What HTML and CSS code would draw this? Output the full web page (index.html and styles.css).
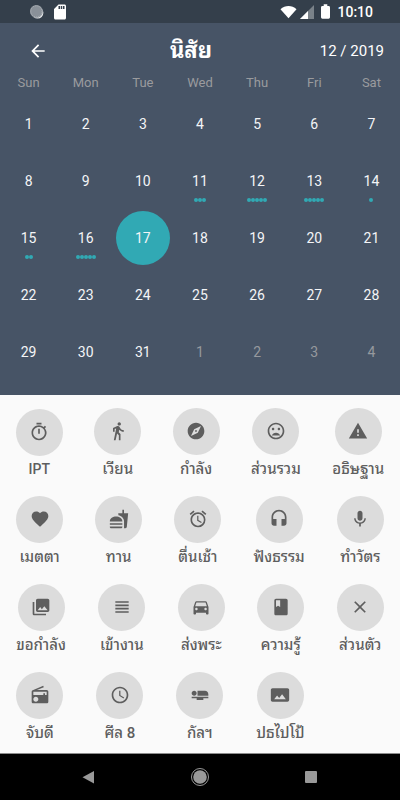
FILE: index.html
```html
<!DOCTYPE html>
<html lang="th">
<head>
<meta charset="utf-8">
<meta name="viewport" content="width=device-width, initial-scale=1">
<title>นิสัย</title>
<link rel="stylesheet" href="styles.css">
</head>
<body>
<div class="status">
  <div class="status-group status-left">
    <svg class="sync" viewBox="0 0 16 16" aria-hidden="true"><circle cx="8.6" cy="8.8" r="5.800" fill="#e8eaec"/><circle cx="7.4" cy="7.4" r="6.4" fill="#8a9199"/><circle cx="7.4" cy="7.4" r="5.6" fill="none" stroke="#b4b9be" stroke-dasharray="1 1"/></svg>
    <svg class="sd" viewBox="0 0 24 24" aria-hidden="true"><path d="M18 2h-8L4.020 8 4 20c0 1.100.9 2 2 2h12c1.100 0 2-.9 2-2V4c0-1.100-.9-2-2-2zm-6 6h-2V4h2v4zm3 0h-2V4h2v4zm3 0h-2V4h2v4z"/></svg>
  </div>
  <div class="status-group status-right">
    <svg class="wifi" viewBox="0 0 18 14" aria-hidden="true"><path d="M.5 4C5.500-.3 12.500-.3 17.500 4L9 13.600z"/></svg>
    <svg class="signal" viewBox="0 0 14 14" aria-hidden="true"><path d="M14 0v14H0z" opacity=".35"/><path d="M8 6v8H0z"/></svg>
    <svg class="battery" viewBox="0 0 10 16" aria-hidden="true"><path d="M3 0h4v2h1.500Q10 2 10 3.500v11Q10 16 8.500 16h-7Q0 16 0 14.500v-11Q0 2 1.500 2H3z"/></svg>
    <span class="clock">10:10</span>
  </div>
</div>
<main>
  <section class="calendar">
    <header class="bar">
      <button class="back" type="button" aria-label="Back"><svg class="icon" viewBox="0 0 24 24"><path d="M20 11H7.830l5.590-5.590L12 4l-8 8 8 8 1.410-1.410L7.830 13H20v-2z"/></svg></button>
      <h1>นิสัย</h1>
      <span class="month">12 / 2019</span>
    </header>
    <table>
      <thead>
        <tr><th>Sun</th><th>Mon</th><th>Tue</th><th>Wed</th><th>Thu</th><th>Fri</th><th>Sat</th></tr>
      </thead>
      <tbody>
        <tr><td><button class="day">1</button></td><td><button class="day">2</button></td><td><button class="day">3</button></td><td><button class="day">4</button></td><td><button class="day">5</button></td><td><button class="day">6</button></td><td><button class="day">7</button></td></tr>
        <tr><td><button class="day">8</button></td><td><button class="day">9</button></td><td><button class="day">10</button></td><td><button class="day">11<span class="dots"><i></i><i></i><i></i></span></button></td><td><button class="day">12<span class="dots"><i></i><i></i><i></i><i></i><i></i></span></button></td><td><button class="day">13<span class="dots"><i></i><i></i><i></i><i></i><i></i></span></button></td><td><button class="day">14<span class="dots"><i></i></span></button></td></tr>
        <tr><td><button class="day">15<span class="dots"><i></i><i></i></span></button></td><td><button class="day">16<span class="dots"><i></i><i></i><i></i><i></i><i></i></span></button></td><td><button class="day selected">17</button></td><td><button class="day">18</button></td><td><button class="day">19</button></td><td><button class="day">20</button></td><td><button class="day">21</button></td></tr>
        <tr><td><button class="day">22</button></td><td><button class="day">23</button></td><td><button class="day">24</button></td><td><button class="day">25</button></td><td><button class="day">26</button></td><td><button class="day">27</button></td><td><button class="day">28</button></td></tr>
        <tr><td><button class="day">29</button></td><td><button class="day">30</button></td><td><button class="day">31</button></td><td><button class="day outside">1</button></td><td><button class="day outside">2</button></td><td><button class="day outside">3</button></td><td><button class="day outside">4</button></td></tr>
      </tbody>
    </table>
  </section>
  <section class="habits">
    <div class="row">
      <button class="habit"><span class="disc"><svg class="icon" viewBox="0 0 24 24"><path d="M15 1H9v2h6V1zm-4 13h2V8h-2v6zm8.030-6.610l1.420-1.420c-.43-.51-.9-.99-1.410-1.410l-1.420 1.420A8.962 8.962 0 0 0 12 4c-4.970 0-9 4.030-9 9s4.020 9 9 9a8.994 8.994 0 0 0 7.030-14.610zM12 20c-3.870 0-7-3.130-7-7s3.130-7 7-7 7 3.130 7 7-3.130 7-7 7z"/></svg></span><span class="label latin">IPT</span></button>
      <button class="habit"><span class="disc"><svg class="icon" viewBox="0 0 24 24"><path d="M13.500 5.500c1.100 0 2-.9 2-2s-.9-2-2-2-2 .9-2 2 .9 2 2 2zM9.800 8.900L7 23h2.100l1.800-8 2.100 2v6h2v-7.500l-2.100-2 .6-3C14.800 12 16.800 13 19 13v-2c-1.900 0-3.500-1-4.300-2.400l-1-1.600c-.4-.6-1-1-1.700-1-.3 0-.5.1-.8.1L6 8.300V13h2V9.600l1.800-.7"/></svg></span><span class="label">เวียน</span></button>
      <button class="habit"><span class="disc"><svg class="icon" viewBox="0 0 24 24"><path d="M12 10.900c-.61 0-1.100.49-1.100 1.100s.49 1.100 1.100 1.100c.61 0 1.100-.49 1.100-1.100s-.49-1.100-1.100-1.100zM12 2C6.480 2 2 6.480 2 12s4.480 10 10 10 10-4.480 10-10S17.520 2 12 2zm2.190 12.190L6 18l3.810-8.190L18 6l-3.810 8.190z"/></svg></span><span class="label">กำลัง</span></button>
      <button class="habit"><span class="disc"><svg class="icon" viewBox="0 0 24 24"><path d="M11.990 2C6.470 2 2 6.480 2 12s4.470 10 9.990 10C17.520 22 22 17.520 22 12S17.520 2 11.990 2zM12 20c-4.420 0-8-3.580-8-8s3.580-8 8-8 8 3.580 8 8-3.580 8-8 8zm3.500-9c.83 0 1.500-.67 1.500-1.500S16.330 8 15.500 8 14 8.670 14 9.500s.67 1.500 1.500 1.500zm-7 0c.83 0 1.500-.67 1.500-1.500S9.330 8 8.500 8 7 8.670 7 9.500 7.670 11 8.500 11zm3.500 3c-2.330 0-4.310 1.460-5.110 3.500h10.220c-.8-2.040-2.780-3.500-5.110-3.500z"/></svg></span><span class="label">ส่วนรวม</span></button>
      <button class="habit"><span class="disc"><svg class="icon" viewBox="0 0 24 24"><path d="M1 21h22L12 2 1 21zm12-3h-2v-2h2v2zm0-4h-2v-4h2v4z"/></svg></span><span class="label">อธิษฐาน</span></button>
    </div>
    <div class="row">
      <button class="habit"><span class="disc"><svg class="icon" viewBox="0 0 24 24"><path d="M12 21.350l-1.450-1.320C5.400 15.360 2 12.280 2 8.500 2 5.420 4.420 3 7.500 3c1.740 0 3.410.81 4.500 2.090C13.090 3.810 14.760 3 16.500 3 19.580 3 22 5.420 22 8.500c0 3.780-3.400 6.860-8.550 11.540L12 21.350z"/></svg></span><span class="label">เมตตา</span></button>
      <button class="habit"><span class="disc"><svg class="icon" viewBox="0 0 24 24"><path d="M18.060 22.990h1.660c.84 0 1.530-.64 1.630-1.460L23 5.050h-5V1h-1.970v4.050h-4.970l.3 2.340c1.710.47 3.310 1.320 4.270 2.260 1.440 1.420 2.430 2.890 2.430 5.290v8.050zM1 21.990V21h15.030v.99c0 .55-.45 1-1.010 1H2.010c-.56 0-1.010-.45-1.010-1zm15.030-7c0-8-15.030-8-15.030 0h15.030zM1.020 17h15v2h-15z"/></svg></span><span class="label">ทาน</span></button>
      <button class="habit"><span class="disc"><svg class="icon" viewBox="0 0 24 24"><path d="M22 5.720l-4.600-3.860-1.290 1.530 4.600 3.860L22 5.720zM7.880 3.390L6.600 1.860 2 5.710l1.290 1.530 4.590-3.850zM12.500 8H11v6l4.750 2.850.75-1.230-4-2.370V8zM12 4c-4.970 0-9 4.030-9 9s4.020 9 9 9a9 9 0 0 0 0-18zm0 16c-3.870 0-7-3.130-7-7s3.130-7 7-7 7 3.130 7 7-3.130 7-7 7z"/></svg></span><span class="label">ตื่นเช้า</span></button>
      <button class="habit"><span class="disc"><svg class="icon" viewBox="0 0 24 24"><path d="M12 1c-4.970 0-9 4.030-9 9v7c0 1.660 1.340 3 3 3h3v-8H5v-2c0-3.870 3.130-7 7-7s7 3.130 7 7v2h-4v8h3c1.660 0 3-1.340 3-3v-7c0-4.970-4.030-9-9-9z"/></svg></span><span class="label">ฟังธรรม</span></button>
      <button class="habit"><span class="disc"><svg class="icon" viewBox="0 0 24 24"><path d="M12 14c1.660 0 2.990-1.340 2.990-3L15 5c0-1.660-1.340-3-3-3S9 3.340 9 5v6c0 1.660 1.340 3 3 3zm5.300-3c0 3-2.540 5.100-5.300 5.100S6.700 14 6.700 11H5c0 3.410 2.720 6.230 6 6.720V21h2v-3.280c3.280-.48 6-3.300 6-6.720h-1.700z"/></svg></span><span class="label">ทำวัตร</span></button>
    </div>
    <div class="row">
      <button class="habit"><span class="disc"><svg class="icon" viewBox="0 0 24 24"><path d="M22 16V4c0-1.100-.9-2-2-2H8c-1.100 0-2 .9-2 2v12c0 1.100.9 2 2 2h12c1.100 0 2-.9 2-2zm-11-4l2.030 2.710L16 11l4 5H8l3-4zM2 6v14c0 1.100.9 2 2 2h14v-2H4V6H2z"/></svg></span><span class="label">ขอกำลัง</span></button>
      <button class="habit"><span class="disc"><svg class="icon" viewBox="0 0 24 24"><path d="M4 15h16v-2H4v2zm0 4h16v-2H4v2zm0-8h16V9H4v2zm0-6v2h16V5H4z"/></svg></span><span class="label">เข้างาน</span></button>
      <button class="habit"><span class="disc"><svg class="icon" viewBox="0 0 24 24"><path d="M18.920 6.010C18.720 5.420 18.160 5 17.500 5h-11c-.66 0-1.210.42-1.420 1.010L3 12v8c0 .55.45 1 1 1h1c.55 0 1-.45 1-1v-1h12v1c0 .55.45 1 1 1h1c.55 0 1-.45 1-1v-8l-2.080-5.990zM6.500 16c-.83 0-1.500-.67-1.500-1.500S5.670 13 6.500 13s1.500.67 1.500 1.500S7.330 16 6.500 16zm11 0c-.83 0-1.500-.67-1.500-1.500s.67-1.500 1.500-1.500 1.500.67 1.500 1.500-.67 1.500-1.500 1.500zM5 11l1.500-4.500h11L19 11H5z"/></svg></span><span class="label">ส่งพระ</span></button>
      <button class="habit"><span class="disc"><svg class="icon" viewBox="0 0 24 24"><path d="M18 2H6c-1.100 0-2 .9-2 2v16c0 1.100.9 2 2 2h12c1.100 0 2-.9 2-2V4c0-1.100-.9-2-2-2zM6 4h5v8l-2.500-1.500L6 12V4z"/></svg></span><span class="label">ความรู้</span></button>
      <button class="habit"><span class="disc"><svg class="icon" viewBox="0 0 24 24"><path d="M19 6.410L17.590 5 12 10.590 6.410 5 5 6.410 10.590 12 5 17.590 6.410 19 12 13.410 17.590 19 19 17.590 13.410 12z"/></svg></span><span class="label">ส่วนตัว</span></button>
    </div>
    <div class="row">
      <button class="habit"><span class="disc"><svg class="icon" viewBox="0 0 24 24"><path d="M3.240 6.150C2.510 6.430 2 7.170 2 8v12c0 1.100.89 2 2 2h16c1.110 0 2-.9 2-2V8c0-1.110-.89-2-2-2H8.300l8.260-3.340L15.880 1 3.240 6.150zM7 20c-1.660 0-3-1.340-3-3s1.340-3 3-3 3 1.340 3 3-1.340 3-3 3zm13-8h-2v-2h-2v2H4V8h16v4z"/></svg></span><span class="label">จับดี</span></button>
      <button class="habit"><span class="disc"><svg class="icon" viewBox="0 0 24 24"><path d="M11.990 2C6.470 2 2 6.480 2 12s4.470 10 9.990 10C17.520 22 22 17.520 22 12S17.520 2 11.990 2zM12 20c-4.420 0-8-3.580-8-8s3.580-8 8-8 8 3.580 8 8-3.580 8-8 8zm.5-13H11v6l5.250 3.150.75-1.230-4.500-2.670z"/></svg></span><span class="label">ศีล 8</span></button>
      <button class="habit"><span class="disc"><svg class="icon" viewBox="0 0 24 24"><path d="M22 11v2H9V7h9c2.210 0 4 1.790 4 4zM2 14v2h6v2h8v-2h6v-2H2zm5.140-1.900c1.160-1.190 1.140-3.080-.04-4.240-1.190-1.160-3.080-1.140-4.240.04-1.160 1.190-1.140 3.080.04 4.240 1.190 1.160 3.080 1.140 4.240-.04z"/></svg></span><span class="label">กัลฯ</span></button>
      <button class="habit"><span class="disc"><svg class="icon" viewBox="0 0 24 24"><path d="M21 4H3C2 4 1 5 1 6v12c0 1.100.9 2 2 2h18c1 0 2-1 2-2V6c0-1-1-2-2-2zM5 17l3.500-4.500 2.500 3.010L14.500 11l4.500 6H5z"/></svg></span><span class="label">ปธไปโป้</span></button>
      <div class="habit"></div>
    </div>
  </section>
</main>
<nav class="nav">
  <button type="button" aria-label="Back"><svg viewBox="0 0 20 20"><path d="M16 4v12.500L4.500 10.250z"/></svg></button>
  <button type="button" aria-label="Home"><svg viewBox="0 0 20 20"><circle cx="10" cy="10" r="6.800"/><circle cx="10" cy="10" r="8.500" fill="none" stroke="#999" stroke-width="1"/></svg></button>
  <button type="button" aria-label="Recent"><svg viewBox="0 0 20 20"><rect x="3" y="4" width="12" height="12" rx="1"/></svg></button>
</nav>
</body>
</html>
```
FILE: styles.css
```css
* { box-sizing: border-box; }

body {
  margin: 0;
  min-height: 100vh;
  display: flex;
  flex-direction: column;
  background: #fafafa;
  font-family: Roboto, "Noto Sans Thai Looped", Loma, Garuda, Waree, "Noto Sans Thai", "Noto Sans", sans-serif;
  font-size: 14px;
}

button {
  margin: 0;
  padding: 0;
  border: 0;
  background: none;
  color: inherit;
  font: inherit;
}

svg { display: block; fill: currentColor; }
.icon { width: 20px; height: 20px; }

.status {
  display: flex;
  justify-content: space-between;
  align-items: center;
  height: 23px;
  padding: 0 27px 0 29px;
  background: #343f4b;
  color: #fff;
}
.status-group { display: flex; align-items: center; }
.status-left { gap: 6px; }
.status-right { gap: 3px; }
.sync { width: 16px; height: 16px; }
.sd { width: 18px; height: 18px; }
.wifi { width: 17px; height: 14px; }
.signal { width: 14px; height: 14px; }
.battery { width: 9px; height: 15px; margin: 0 4px; }
.clock { font-weight: 500; line-height: 20px; }

main { flex: 1; }

.calendar {
  padding: 5px 0 15px;
  background: #475466;
  color: #f4f5f7;
}
.bar {
  display: flex;
  justify-content: space-between;
  align-items: center;
  height: 46px;
  padding: 0 16px 0 14px;
  color: #fff;
}
.back {
  display: flex;
  justify-content: center;
  align-items: center;
  width: 48px;
  height: 46px;
}
h1 { margin: 0; font-size: 22px; font-weight: 700; line-height: 46px; }
.month { font-size: 15px; }

table {
  width: 100%;
  table-layout: fixed;
  border-collapse: collapse;
}
th {
  height: 21px;
  padding: 0;
  color: #9a9b9e;
  font-size: 13px;
  font-weight: 400;
  line-height: 18px;
  vertical-align: top;
}
td { height: 57px; padding: 0; }
.day {
  position: relative;
  display: block;
  width: 54px;
  height: 54px;
  margin: 0 auto;
  border-radius: 50%;
  line-height: 54px;
}
.selected { background: #31a9b4; }
.outside { color: #96999e; }
.dots {
  position: absolute;
  right: 0;
  bottom: 6px;
  left: 0;
  display: flex;
  justify-content: center;
}
.dots i {
  width: 4px;
  height: 4px;
  border-radius: 50%;
  background: #31a9b4;
}

.habits { padding-top: 6px; }
.row {
  display: flex;
  justify-content: space-around;
  align-items: center;
  min-height: 88px;
}
.habit {
  display: flex;
  flex-direction: column;
  align-items: center;
  min-width: 46px;
  color: #5e5e5e;
}
.disc {
  display: flex;
  justify-content: center;
  align-items: center;
  width: 47px;
  height: 47px;
  border-radius: 50%;
  background: #dcdcdc;
}
.label { font-size: 15px; font-weight: 500; line-height: 28px; white-space: nowrap; }
.latin { font-size: 14px; line-height: 26px; }

.nav {
  display: flex;
  height: 47px;
  padding: 0 8%;
  border-top: 1px solid #8c8c8c;
  background: #000;
  color: #999;
}
.nav button {
  flex: 1;
  display: flex;
  justify-content: center;
  align-items: center;
}
.nav svg { width: 20px; height: 20px; }
```
